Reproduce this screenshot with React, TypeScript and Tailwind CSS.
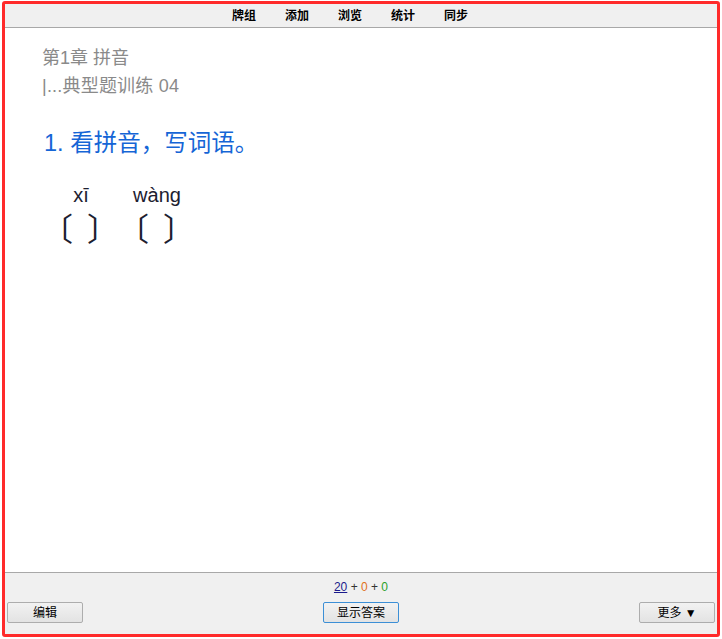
const navItems = ["牌组", "添加", "浏览", "统计", "同步"];

const words = [
  { pinyin: "xī" },
  { pinyin: "wàng" },
];

const btnBase =
  "h-[21px] w-[76px] rounded-[2px] border bg-gradient-to-b from-[#f2f2f2] to-[#e3e3e3] text-[12px] text-black leading-none flex items-center justify-center";

export default function App() {
  return (
    <div className="w-[722px] h-[639px] bg-white pt-[1px] pl-[2px] font-['Liberation_Sans','Noto_Sans_CJK_SC',sans-serif]">
      <div className="w-[718px] h-[636px] border-[3px] border-[#ff2a2a] rounded-[3px] flex flex-col overflow-hidden">
        {/* top nav */}
        <div className="h-[24px] shrink-0 bg-[#f0f0f0] border-b border-[#a8a8a8] flex justify-center items-center gap-[29px] pr-[22px]">
          {navItems.map((item) => (
            <span key={item} className="text-[12px] font-bold text-black">
              {item}
            </span>
          ))}
        </div>

        {/* card */}
        <div className="flex-1 bg-white pl-[37px] pt-[16px]">
          <div className="text-[18px] leading-[28px] text-[#8a8a8a]">第1章 拼音</div>
          <div className="text-[18px] leading-[28px] text-[#8a8a8a] tracking-[0.2px]">|...典型题训练 04</div>
          <div className="mt-[28px] ml-[2px] text-[23.5px] leading-[30px] text-[#1565d6]">
            1. 看拼音，写词语。
          </div>
          <div className="mt-[25px] flex">
            {words.map((w) => (
              <div key={w.pinyin} className="w-[76px] flex flex-col items-center text-[#1c2030]">
                <div className="text-[20px] leading-[24px] pl-[2px]">{w.pinyin}</div>
                <div className="mt-[2px] flex items-center gap-[14px] text-[32px] leading-[36px] font-['Noto_Sans_CJK_SC',sans-serif]">
                  <span>〔</span>
                  <span>〕</span>
                </div>
              </div>
            ))}
          </div>
        </div>

        {/* bottom bar */}
        <div className="h-[62px] shrink-0 bg-[#f0f0f0] border-t border-[#a8a8a8] px-[2px] pt-[7px]">
          <div className="text-center text-[12px] leading-[14px]">
            <span className="text-[#1a1a8c] underline">20</span>
            <span className="text-[#333]"> + </span>
            <span className="text-[#e07020]">0</span>
            <span className="text-[#333]"> + </span>
            <span className="text-[#2aa02a]">0</span>
          </div>
          <div className="mt-[8px] flex items-center justify-between">
            <button className={btnBase + " border-[#adadad]"}>编辑</button>
            <button className={btnBase + " border-[#3c8fd6]"}>显示答案</button>
            <button className={btnBase + " border-[#adadad]"}>更多 ▼</button>
          </div>
        </div>
      </div>
    </div>
  );
}
